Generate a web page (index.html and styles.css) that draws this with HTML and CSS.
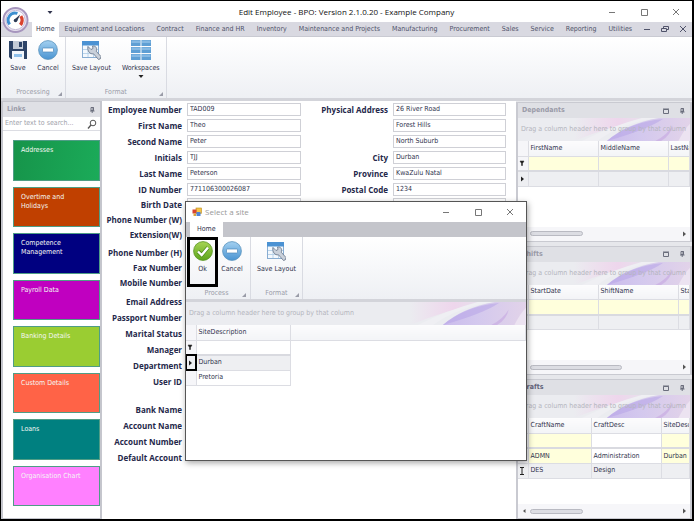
FILE: index.html
```html
<!DOCTYPE html>
<html lang="en">
  <head>
    <meta charset="UTF-8">
    <title>Edit Employee - BPO: Version 2.1.0.20 - Example Company</title>
    <link rel="stylesheet" href="styles.css">
  </head>
  <body>
    <svg class="defs" aria-hidden="true">
      <defs>
        <linearGradient id="blue" x1="0" y1="0" x2="0" y2="1">
          <stop offset="0" stop-color="#a3d0f0"/><stop offset="1" stop-color="#4a94d2"/>
        </linearGradient>
        <linearGradient id="green" x1="0" y1="0" x2="0" y2="1">
          <stop offset="0" stop-color="#a6d455"/><stop offset="1" stop-color="#5da51c"/>
        </linearGradient>
        <linearGradient id="pink" x1="0" y1="0" x2="1" y2="0">
          <stop offset="0" stop-color="#efd3ec" stop-opacity="0"/><stop offset=".6" stop-color="#eed6ec"/><stop offset="1" stop-color="#e6e2ec"/>
        </linearGradient>
        <linearGradient id="violet" x1="0" y1="0" x2="1" y2="0">
          <stop offset="0" stop-color="#cbbcec"/><stop offset=".4" stop-color="#d3c8ee"/><stop offset="1" stop-color="#e2d3e9"/>
        </linearGradient>
        <symbol id="i-swoosh" viewBox="0 0 120 24" preserveAspectRatio="none">
          <path d="M0 24Q40 8 76 0H0z" fill="url(#pink)"/>
          <path d="M24 24Q50 5 86 0H70Q40 8 8 24z" fill="#efeff3"/>
          <path d="M34 24Q54 6 88 0H120V24z" fill="url(#violet)"/>
          <path d="M34 24Q58 4 92 1Q76 12 34 24z" fill="#b9a6e8" opacity=".6"/>
          <path d="M84 24Q96 18 102 8Q100 18 90 24z" fill="#cbb0e4" opacity=".8"/>
          <path d="M108 24Q114 12 120 6V24z" fill="#ece3f1"/>
        </symbol>
        <symbol id="i-save" viewBox="0 0 20 20">
          <path d="M1 1H19V19H3L1 17z" fill="#2d4467"/>
          <path d="M5 1H15V9H5z" fill="#c3cbd6"/>
          <path d="M11 2H14V7H11z" fill="#2d4467"/>
          <path d="M4 11H16V19H4z" fill="#f4f7fb"/>
          <path d="M6 14H14V17H6z" fill="#8fc0ea"/>
        </symbol>
        <symbol id="i-cancel" viewBox="0 0 20 20">
          <circle cx="10" cy="10" r="9.4" fill="url(#blue)" stroke="#5a93bd" stroke-width=".8"/>
          <rect x="4.5" y="8" width="11" height="4" rx=".5" fill="#fff" stroke="#4a87b9" stroke-width=".7"/>
        </symbol>
        <symbol id="i-ok" viewBox="0 0 20 20">
          <circle cx="10" cy="10" r="9.4" fill="url(#green)" stroke="#5b9526" stroke-width=".8"/>
          <path d="M5 10.5L8.7 14L15 6.5" fill="none" stroke="#4d8c1c" stroke-width="3.8"/>
          <path d="M5 10.5L8.7 14L15 6.5" fill="none" stroke="#fff" stroke-width="2.4"/>
        </symbol>
        <symbol id="i-layout" viewBox="0 0 20 20">
          <rect x="1.5" y="1.5" width="16" height="16" fill="#f3f8fd" stroke="#88add2"/>
          <rect x="1" y="1" width="17" height="4.5" fill="#4b92d3"/>
          <path d="M7 5.5V17M12.5 5.5V17M2 9.5H17M2 13.5H17" stroke="#b4cfe8" stroke-width=".9"/>
          <path d="M7 6.5L10 9.5L12 8.5L11.5 6C15 5.500 16.500 8.500 15.200 11.200L20 16.500Q20 19.500 17.500 19.500L12.500 13.800C9 14.500 6 11 7 6.500z" fill="#c9d0da" stroke="#667285" stroke-width=".8"/>
        </symbol>
        <symbol id="i-workspaces" viewBox="0 0 20 20" preserveAspectRatio="none">
          <path d="M0 0H9.500V6H0zM10.500 0H20V6H10.500zM0 7H9.500V13H0zM10.500 7H20V13H10.500zM0 14H9.500V20H0zM10.500 14H20V20H10.500z" fill="#5f9fd4"/>
          <path d="M.5 .5H9V3H.5zM11 .5H19.500V3H11zM.5 7.500H9V10H.5zM11 7.500H19.500V10H11zM.5 14.500H9V17H.5zM11 14.500H19.500V17H11z" fill="#86b9e3"/>
        </symbol>
        <symbol id="i-min" viewBox="0 0 8 8"><path d="M1 4.500H7" stroke="currentColor" fill="none"/></symbol>
        <symbol id="i-max" viewBox="0 0 8 8"><path d="M1.500 1.500H7.500V7.500H1.500z" stroke="currentColor" fill="none"/></symbol>
        <symbol id="i-close" viewBox="0 0 8 8"><path d="M1 1L7 7M7 1L1 7" stroke="currentColor" fill="none"/></symbol>
        <symbol id="i-restore" viewBox="0 0 8 8"><path d="M.5 3.500H5.500V6.500H.5zM2.500 3V1.500H7.500V4.500H6" stroke="currentColor" fill="none"/></symbol>
        <symbol id="i-float" viewBox="0 0 8 8"><path d="M1.500 2.500H6.500V6.500H1.500z" stroke="currentColor" fill="none"/><path d="M1 2H7" stroke="currentColor"/></symbol>
        <symbol id="i-pin" viewBox="0 0 8 8"><path d="M3 1.500H5.500V4.500H3zM2 5H6.500M4.200 5V7" stroke="currentColor" fill="none"/><path d="M4.500 1.500H6V4.500H4.500z" fill="currentColor"/></symbol>
        <symbol id="i-filter" viewBox="0 0 6 6"><path d="M1 1H5L3.500 3.500V5.500H2.500V3.500z" fill="currentColor" stroke="currentColor" stroke-width=".5"/></symbol>
        <symbol id="i-current" viewBox="0 0 6 6"><path d="M2 .5L5 3L2 5.500z" fill="currentColor"/></symbol>
        <symbol id="i-down" viewBox="0 0 6 6"><path d="M.5 2H5.500L3 5z" fill="currentColor"/></symbol>
        <symbol id="i-left" viewBox="0 0 6 6"><path d="M4.500 1L2 3L4.500 5z" fill="currentColor"/></symbol>
        <symbol id="i-corner" viewBox="0 0 4 4"><path d="M4 0V4H0z" fill="currentColor"/></symbol>
        <symbol id="i-edit" viewBox="0 0 6 8"><path d="M1 .5H5M1 7.500H5M3 .5V7.500" stroke="currentColor" fill="none"/></symbol>
      </defs>
    </svg>

    <div class="app">
      <header class="titlebar">
        <div class="quick">
          <svg class="logo" viewBox="0 0 28 28">
            <circle cx="14" cy="14" r="12.500" fill="#e9e4f0" stroke="#a695bd" stroke-width="2"/>
            <circle cx="14" cy="14" r="10" fill="#fff" stroke="#c4b8d6"/>
            <path d="M8 18.500A7.200 7.200 0 0 1 16 7.200" fill="none" stroke="#3d8fd0" stroke-width="3"/>
            <path d="M19.500 10A7.200 7.200 0 0 1 19 19" fill="none" stroke="#d9432f" stroke-width="3.500"/>
            <path d="M19 8L15.500 15.500L13 13.500z" fill="#2d3a55"/>
            <circle cx="14" cy="14.500" r="1.800" fill="#2d3a55"/>
          </svg>
          <button class="icon-btn" aria-label="Customize toolbar"><svg class="i6"><use href="#i-down"/></svg></button>
        </div>
        <h1>Edit Employee - BPO: Version 2.1.0.20 - Example Company</h1>
        <div class="win-buttons">
          <button class="icon-btn" aria-label="Minimize"><svg class="i8"><use href="#i-min"/></svg></button>
          <button class="icon-btn" aria-label="Maximize"><svg class="i8"><use href="#i-max"/></svg></button>
          <button class="icon-btn" aria-label="Close"><svg class="i8"><use href="#i-close"/></svg></button>
        </div>
      </header>

      <nav class="tabs">
        <a class="tab active" href="#">Home</a>
        <a class="tab" href="#">Equipment and Locations</a>
        <a class="tab" href="#">Contract</a>
        <a class="tab" href="#">Finance and HR</a>
        <a class="tab" href="#">Inventory</a>
        <a class="tab" href="#">Maintenance and Projects</a>
        <a class="tab" href="#">Manufacturing</a>
        <a class="tab" href="#">Procurement</a>
        <a class="tab" href="#">Sales</a>
        <a class="tab" href="#">Service</a>
        <a class="tab" href="#">Reporting</a>
        <a class="tab" href="#">Utilities</a>
        <div class="mdi-buttons">
          <button class="icon-btn" aria-label="Minimize form"><svg class="i8"><use href="#i-min"/></svg></button>
          <button class="icon-btn" aria-label="Restore form"><svg class="i8"><use href="#i-restore"/></svg></button>
          <button class="icon-btn" aria-label="Close form"><svg class="i8"><use href="#i-close"/></svg></button>
        </div>
      </nav>

      <div class="ribbon">
        <section class="group">
          <div class="tools">
            <button class="tool"><svg class="i20"><use href="#i-save"/></svg>Save</button>
            <button class="tool"><svg class="i20"><use href="#i-cancel"/></svg>Cancel</button>
          </div>
          <p class="caption">Processing<svg class="corner"><use href="#i-corner"/></svg></p>
        </section>
        <section class="group">
          <div class="tools">
            <button class="tool"><svg class="i20"><use href="#i-layout"/></svg>Save Layout</button>
            <button class="tool"><svg class="i20"><use href="#i-workspaces"/></svg>Workspaces<svg class="i6"><use href="#i-down"/></svg></button>
          </div>
          <p class="caption">Format<svg class="corner"><use href="#i-corner"/></svg></p>
        </section>
      </div>

      <div class="workspace">
        <aside class="links">
          <h2 class="panel-title">Links<button class="icon-btn" aria-label="Pin links"><svg class="i8"><use href="#i-pin"/></svg></button></h2>
          <div class="search">
            <input type="text" aria-label="Search links" placeholder="Enter text to search...">
            <svg viewBox="0 0 10 10"><circle cx="6" cy="4" r="2.800" fill="none" stroke="#555"/><path d="M4 6L1 9.500" stroke="#555" stroke-width="1.300"/></svg>
          </div>
          <div class="tiles">
            <a class="tile addresses" href="#">Addresses</a>
            <a class="tile overtime" href="#">Overtime and Holidays</a>
            <a class="tile competence" href="#">Competence Management</a>
            <a class="tile payroll" href="#">Payroll Data</a>
            <a class="tile banking" href="#">Banking Details</a>
            <a class="tile custom" href="#">Custom Details</a>
            <a class="tile loans" href="#">Loans</a>
            <a class="tile chart" href="#">Organisation Chart</a>
          </div>
        </aside>

        <form class="employee">
          <div class="column">
            <div class="fields">
              <div class="field"><label for="emp-no">Employee Number</label><input id="emp-no" type="text" value="TAD009"></div>
              <div class="field"><label for="first">First Name</label><input id="first" type="text" value="Theo"></div>
              <div class="field"><label for="second">Second Name</label><input id="second" type="text" value="Peter"></div>
              <div class="field"><label for="initials">Initials</label><input id="initials" type="text" value="TJJ"></div>
              <div class="field"><label for="last">Last Name</label><input id="last" type="text" value="Peterson"></div>
              <div class="field"><label for="id-no">ID Number</label><input id="id-no" type="text" value="771106300026087"></div>
            </div>
            <div class="fields tight">
              <div class="field"><label for="birth">Birth Date</label><input id="birth" type="text"></div>
              <div class="field"><label for="phone-w">Phone Number (W)</label><input id="phone-w" type="text"></div>
              <div class="field"><label for="ext">Extension(W)</label><input id="ext" type="text"></div>
            </div>
            <div class="fields tight spaced">
              <div class="field"><label for="phone-h">Phone Number (H)</label><input id="phone-h" type="text"></div>
              <div class="field"><label for="fax">Fax Number</label><input id="fax" type="text"></div>
              <div class="field"><label for="mobile">Mobile Number</label><input id="mobile" type="text"></div>
            </div>
            <div class="fields spaced">
              <div class="field"><label for="email">Email Address</label><input id="email" type="text"></div>
              <div class="field"><label for="passport">Passport Number</label><input id="passport" type="text"></div>
              <div class="field"><label for="marital">Marital Status</label><input id="marital" type="text"></div>
              <div class="field"><label for="manager">Manager</label><input id="manager" type="text"></div>
              <div class="field"><label for="department">Department</label><input id="department" type="text"></div>
              <div class="field"><label for="user">User ID</label><input id="user" type="text"></div>
            </div>
            <div class="fields bank">
              <div class="field"><label for="bank">Bank Name</label><input id="bank" type="text"></div>
              <div class="field"><label for="acc-name">Account Name</label><input id="acc-name" type="text"></div>
              <div class="field"><label for="acc-no">Account Number</label><input id="acc-no" type="text"></div>
              <div class="field"><label for="acc-def">Default Account</label><input id="acc-def" type="text"></div>
            </div>
          </div>
          <div class="column">
            <div class="fields">
              <div class="field"><label for="addr1">Physical Address</label><input id="addr1" type="text" value="26 River Road"></div>
              <div class="field"><span></span><input aria-label="Address line 2" type="text" value="Forest Hills"></div>
              <div class="field"><span></span><input aria-label="Address line 3" type="text" value="North Suburb"></div>
              <div class="field"><label for="city">City</label><input id="city" type="text" value="Durban"></div>
              <div class="field"><label for="province">Province</label><input id="province" type="text" value="KwaZulu Natal"></div>
              <div class="field"><label for="postal">Postal Code</label><input id="postal" type="text" value="1234"></div>
            </div>
            <div class="fields tight">
              <div class="field"><span></span><input aria-label="Country" type="text"></div>
            </div>
          </div>
        </form>

        <div class="dock">
          <section class="panel tall">
            <h2 class="panel-title">Dependants
              <span><button class="icon-btn" aria-label="Float"><svg class="i8"><use href="#i-float"/></svg></button><button class="icon-btn" aria-label="Pin"><svg class="i8"><use href="#i-pin"/></svg></button></span>
            </h2>
            <div class="group-by"><svg class="swoosh"><use href="#i-swoosh"/></svg><p>Drag a column header here to group by that column</p></div>
            <div class="grid-view">
              <table>
                <colgroup><col class="mark"><col class="w70"><col class="w70"><col></colgroup>
                <thead><tr><th></th><th>FirstName</th><th>MiddleName</th><th>LastName</th></tr></thead>
                <tbody>
                  <tr class="filter"><td><svg class="i6"><use href="#i-filter"/></svg></td><td class="key"></td><td class="key"></td><td class="key"></td></tr>
                  <tr class="current"><td><svg class="i6"><use href="#i-current"/></svg></td><td></td><td></td><td></td></tr>
                </tbody>
              </table>
            </div>
            <div class="scroll"><svg class="i6"><use href="#i-left"/></svg><div class="track"><div class="thumb"></div></div><svg class="i6"><use href="#i-current"/></svg></div>
          </section>

          <section class="panel">
            <h2 class="panel-title">Shifts
              <span><button class="icon-btn" aria-label="Float"><svg class="i8"><use href="#i-float"/></svg></button><button class="icon-btn" aria-label="Pin"><svg class="i8"><use href="#i-pin"/></svg></button></span>
            </h2>
            <div class="group-by"><svg class="swoosh"><use href="#i-swoosh"/></svg><p>Drag a column header here to group by that column</p></div>
            <div class="grid-view">
              <table>
                <colgroup><col class="mark"><col class="w70"><col class="w80"><col></colgroup>
                <thead><tr><th></th><th>StartDate</th><th>ShiftName</th><th>StartTime</th></tr></thead>
                <tbody>
                  <tr class="filter"><td><svg class="i6"><use href="#i-filter"/></svg></td><td class="key"></td><td class="key"></td><td class="key"></td></tr>
                  <tr class="current"><td><svg class="i6"><use href="#i-current"/></svg></td><td></td><td></td><td></td></tr>
                </tbody>
              </table>
            </div>
            <div class="scroll"><svg class="i6"><use href="#i-left"/></svg><div class="track"><div class="thumb wide"></div></div><svg class="i6"><use href="#i-current"/></svg></div>
          </section>

          <section class="panel tall">
            <h2 class="panel-title active">Crafts
              <span><button class="icon-btn" aria-label="Float"><svg class="i8"><use href="#i-float"/></svg></button><button class="icon-btn" aria-label="Pin"><svg class="i8"><use href="#i-pin"/></svg></button></span>
            </h2>
            <div class="group-by"><svg class="swoosh"><use href="#i-swoosh"/></svg><p>Drag a column header here to group by that column</p></div>
            <div class="grid-view">
              <table>
                <colgroup><col class="mark"><col class="w63"><col class="w70"><col></colgroup>
                <thead><tr><th></th><th>CraftName</th><th>CraftDesc</th><th>SiteDescription</th></tr></thead>
                <tbody>
                  <tr class="filter"><td><svg class="i6"><use href="#i-filter"/></svg></td><td class="key"></td><td></td><td class="key"></td></tr>
                  <tr><td></td><td class="key">ADMN</td><td>Administration</td><td class="key">Durban</td></tr>
                  <tr class="current"><td><svg class="edit"><use href="#i-edit"/></svg></td><td>DES</td><td>Design</td><td></td></tr>
                </tbody>
              </table>
            </div>
            <div class="scroll"><svg class="i6"><use href="#i-left"/></svg><div class="track"><div class="thumb"></div></div><svg class="i6"><use href="#i-current"/></svg></div>
          </section>
        </div>
      </div>

      <div class="dialog" role="dialog" aria-labelledby="dialog-title">
        <header class="dialog-title">
          <svg class="form-icon" viewBox="0 0 10 10">
            <rect x="4" y="1" width="5.500" height="5.500" fill="#f6c445" stroke="#b98a1d" stroke-width=".6"/>
            <rect x=".5" y="2.500" width="4" height="4" fill="#d8432e"/>
            <rect x="4.500" y="5" width="4" height="4" fill="#4f83d6"/>
            <rect x="1.500" y="6.500" width="2.500" height="2.500" fill="#d9a63c"/>
          </svg>
          <h2 id="dialog-title">Select a site</h2>
          <div class="win-buttons">
            <button class="icon-btn" aria-label="Minimize"><svg class="i8"><use href="#i-min"/></svg></button>
            <button class="icon-btn" aria-label="Maximize"><svg class="i8"><use href="#i-max"/></svg></button>
            <button class="icon-btn" aria-label="Close"><svg class="i8"><use href="#i-close"/></svg></button>
          </div>
        </header>
        <nav class="dialog-tabs"><a class="tab active" href="#">Home</a></nav>
        <div class="ribbon">
          <section class="group">
            <div class="tools">
              <button class="tool marked"><svg class="i20"><use href="#i-ok"/></svg>Ok</button>
              <button class="tool"><svg class="i20"><use href="#i-cancel"/></svg>Cancel</button>
            </div>
            <p class="caption">Process<svg class="corner"><use href="#i-corner"/></svg></p>
          </section>
          <section class="group">
            <div class="tools">
              <button class="tool"><svg class="i20"><use href="#i-layout"/></svg>Save Layout</button>
            </div>
            <p class="caption">Format<svg class="corner"><use href="#i-corner"/></svg></p>
          </section>
        </div>
        <div class="group-by"><svg class="swoosh"><use href="#i-swoosh"/></svg><p>Drag a column header here to group by that column</p></div>
        <div class="grid-view sites">
          <table>
            <colgroup><col class="mark"><col class="w94"><col></colgroup>
            <thead><tr><th></th><th>SiteDescription</th><th></th></tr></thead>
            <tbody>
              <tr class="filter"><td><svg class="i6"><use href="#i-filter"/></svg></td><td></td><td class="rest"></td></tr>
              <tr class="current"><td class="marked"><svg class="i6"><use href="#i-current"/></svg></td><td>Durban</td><td class="rest"></td></tr>
              <tr><td></td><td>Pretoria</td><td class="rest"></td></tr>
            </tbody>
          </table>
        </div>
      </div>
    </div>
  </body>
</html>
```
FILE: styles.css
```css
* {
  box-sizing: border-box;
}
body {
  margin: 0;
  font-family: "DejaVu Sans Condensed", "DejaVu Sans", sans-serif;
  font-size: 7px;
  line-height: 9px;
  color: #30334d;
  background: #fff;
}
h1, h2, p {
  margin: 0;
  font-size: inherit;
  font-weight: normal;
}
a {
  color: inherit;
  text-decoration: none;
}
button, input {
  font: inherit;
  color: inherit;
  margin: 0;
  padding: 0;
  border: 0;
  background: none;
}
svg {
  display: block;
  flex: none;
}
.defs {
  position: absolute;
  width: 0;
  height: 0;
}
.i6 { width: 6px; height: 6px; }
.i8 { width: 8px; height: 8px; }
.i20 { width: 20px; height: 20px; }

.app {
  display: flex;
  flex-direction: column;
  height: 100vh;
  border: 1px solid #000;
  border-right-width: 2px;
  border-bottom-width: 2px;
  overflow: hidden;
}

/* title bar */
.titlebar {
  display: grid;
  grid-template-columns: 1fr auto 1fr;
  align-items: center;
  height: 21px;
  flex: none;
}
h1, .dialog-title h2 {
  font-family: "Open Sans", "Noto Sans", sans-serif;
  font-size: 8px;
  line-height: 12px;
  color: #111;
}
.quick {
  display: flex;
  align-items: center;
}
.logo {
  position: absolute;
  left: 2px;
  top: 6px;
  width: 27px;
  height: 28px;
}
.quick .icon-btn {
  margin-left: 46px;
}
.win-buttons {
  display: flex;
  justify-content: flex-end;
  gap: 24px;
  padding-right: 12px;
  color: #777;
}

/* ribbon */
.tabs {
  display: flex;
  height: 15px;
  flex: none;
  padding-left: 31px;
  background: #d9d9e1;
  border-bottom: 1px solid #c9cad2;
  color: #50536a;
}
.tab {
  padding: 0 6px;
  line-height: 15px;
  white-space: nowrap;
}
.tab.active {
  height: 15px;
  padding: 0 4px;
  background: #fff;
  color: #30334d;
}
.mdi-buttons {
  display: flex;
  align-items: center;
  gap: 10px;
  margin-left: auto;
  padding-right: 5px;
}
.ribbon {
  display: flex;
  height: 64px;
  flex: none;
  background: linear-gradient(#fff, #eef0f4);
  border-bottom: 3px solid #d3d4da;
}
.group {
  display: flex;
  flex-direction: column;
  padding: 3px 3px 1px;
  border-right: 1px solid #d9dbe2;
}
.tools {
  display: flex;
  flex: 1;
  gap: 2px;
}
.group + .group .tools {
  gap: 5px;
}
.tool {
  display: flex;
  flex-direction: column;
  align-items: center;
  min-width: 28px;
  padding: 0 3px;
  white-space: nowrap;
}
.tool .i20 {
  margin-bottom: 4px;
}
.tool .i6 {
  color: #222;
}
.caption {
  position: relative;
  line-height: 10px;
  text-align: center;
  color: #9a9ca8;
}
.corner {
  position: absolute;
  right: 0;
  bottom: 1px;
  width: 4px;
  height: 4px;
}

/* main area */
.workspace {
  display: flex;
  flex: 1;
  min-height: 0;
}
.panel-title {
  display: flex;
  align-items: center;
  justify-content: space-between;
  height: 15px;
  flex: none;
  padding: 0 4px;
  font-weight: bold;
  color: #9a9ba8;
  background: #dfe0e5;
}
.panel-title.active {
  color: #62647a;
}
.panel-title span {
  display: flex;
  gap: 8px;
}
.panel-title .icon-btn {
  color: #6b6e7d;
}
.links {
  display: flex;
  flex-direction: column;
  width: 101px;
  flex: none;
  border: 1px solid #c5c6cd;
  border-width: 1px 2px 1px 2px;
}
.search {
  display: flex;
  align-items: center;
  height: 14px;
  flex: none;
  padding: 0 3px 0 2px;
  border-bottom: 1px solid #dcdde3;
}
.search input {
  flex: 1;
  min-width: 0;
}
.search svg {
  width: 10px;
  height: 10px;
}
input::placeholder {
  color: #a0a1aa;
}
.tiles {
  display: flex;
  flex-direction: column;
  flex: 1;
  gap: 6px;
  padding: 9px 0 12px 10px;
}
.tile {
  flex: 1;
  padding: 5px 24px 0 7px;
  border: 1px solid #4f9d86;
  color: #f4f7f4;
}
.tile.banking, .tile.chart { padding-right: 4px; }
.addresses { background: linear-gradient(100deg, #16944a, #1bab59); }
.overtime { background: #c04000; }
.competence { background: #000080; }
.payroll { background: #c000c0; }
.banking { background: #9acd32; }
.custom { background: #ff6347; }
.loans { background: #008080; }
.chart { background: #ff80ff; }

.employee {
  display: grid;
  grid-template-columns: 199px 1fr;
  align-content: start;
  flex: 1;
  min-width: 0;
  padding-right: 10px;
}
.field {
  display: grid;
  grid-template-columns: 1fr 114px;
  align-items: center;
  gap: 5px;
  height: 16px;
}
.column + .column .field {
  grid-template-columns: 1fr 113px;
}
.tight .field {
  height: 15px;
}
.field label {
  text-align: right;
  font-family: "Open Sans", "Noto Sans", sans-serif;
  font-size: 8px;
  font-weight: bold;
  color: #25284a;
  white-space: nowrap;
}
.field input {
  width: 100%;
  height: 13px;
  padding: 0 2px;
  border: 1px solid #cfd0d6;
  background: #fff;
}
.spaced { margin-top: 3px; }
.bank { margin-top: 12px; }
.bank input { visibility: hidden; }

/* docked grids */
.dock {
  display: flex;
  flex-direction: column;
  gap: 4px;
  width: 176px;
  flex: none;
  padding-top: 1px;
  background: #e6e7eb;
}
.panel {
  display: flex;
  flex-direction: column;
  flex: 13;
  min-height: 0;
  border: 2px solid #c9cad1;
  border-width: 1px 2px 1px 2px;
  background: #fff;
}
.panel.tall {
  flex: 14;
}
.group-by {
  position: relative;
  height: 23px;
  flex: none;
  padding: 0 3px;
  overflow: hidden;
  line-height: 23px;
  color: #b4b5bd;
  background: #ebecf0;
  white-space: nowrap;
}
.group-by p {
  position: relative;
}
.swoosh {
  position: absolute;
  right: 0;
  top: 0;
  width: 116px;
  height: 23px;
}
.grid-view {
  flex: 1;
  min-height: 0;
  overflow: hidden;
}
table {
  width: 100%;
  table-layout: fixed;
  border-collapse: collapse;
}
.mark { width: 10px; }
.w63 { width: 63px; }
.w70 { width: 70px; }
.w80 { width: 80px; }
.w94 { width: 94px; }
th, td {
  height: 15px;
  padding: 0 2px;
  overflow: hidden;
  text-align: left;
  font-weight: normal;
  white-space: nowrap;
  border: 1px solid #dcdde3;
  border-width: 0 1px 1px 0;
}
th {
  background: linear-gradient(#fcfcfd, #f3f4f7);
}
th:first-child, td:first-child {
  padding: 0 1px;
  background: #f6f6f9;
  color: #222;
}
.filter td {
  border-bottom: 2px solid #d9dae0;
}
.current td {
  background: #eeeff2;
}
.panel .key {
  background: #ffffdc;
}
td.rest {
  border: 0;
  background: #fff;
}
.edit {
  width: 6px;
  height: 8px;
}
.scroll {
  display: flex;
  align-items: center;
  gap: 3px;
  height: 14px;
  flex: none;
  padding: 0 3px;
  background: #f6f6f9;
  color: #555;
}
.track {
  flex: 1;
}
.thumb {
  width: 36%;
  height: 5px;
  border: 1px solid #b9bac2;
  border-radius: 3px;
  background: #dcdde3;
}
.thumb.wide {
  width: 62%;
}

/* site dialog */
.dialog {
  position: absolute;
  left: 185px;
  top: 201px;
  width: 342px;
  height: 260px;
  display: flex;
  flex-direction: column;
  border: 1px solid #555;
  background: #fff;
  box-shadow: 1px 2px 6px rgba(0, 0, 0, .35);
}
.dialog-title {
  display: flex;
  align-items: center;
  height: 20px;
  flex: none;
  padding-left: 6px;
}
.dialog-title h2 {
  margin-left: 3px;
  color: #999;
}
.dialog-title .win-buttons {
  flex: 1;
}
.form-icon {
  width: 10px;
  height: 10px;
}
.dialog-tabs {
  display: flex;
  height: 15px;
  flex: none;
  padding-left: 4px;
  background: #c4c5cb;
}
.dialog-tabs .tab.active {
  padding: 0 7px;
}
.dialog .ribbon {
  height: 65px;
}
.dialog .group {
  padding: 0 4px 1px 1px;
}
.dialog .group + .group {
  padding: 0 3px 1px;
}
.dialog .tool {
  padding-top: 4px;
}
.dialog .tools {
  gap: 0;
}
.tool.marked {
  width: 31px;
  height: 50px;
  padding: 1px 0 0;
  border: 3px solid #000;
}
.dialog .tool.marked {
  padding-top: 1px;
}
.sites .marked {
  outline: 2px solid #000;
  outline-offset: -1px;
}
```
